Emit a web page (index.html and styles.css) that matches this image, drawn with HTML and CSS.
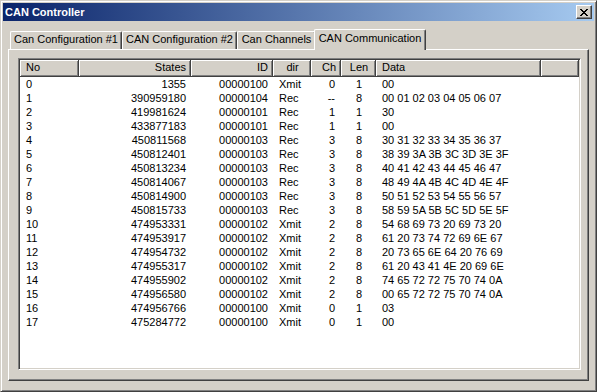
FILE: index.html
```html
<!DOCTYPE html>
<html lang="en">

<head>
    <meta charset="UTF-8">
    <meta name="viewport" content="width=device-width, initial-scale=1.0">
    <title>CAN Controller</title>
    <link rel="stylesheet" href="styles.css">
</head>

<body>

    <div class="window">
        <div class="titlebar">
            <span class="title">CAN Controller</span>
            <button class="close-btn" type="button" aria-label="Close">
                <svg width="8" height="7" viewBox="0 0 8 7" shape-rendering="crispEdges">
                    <path d="M0 0h2v1H0zM6 0h2v1H6zM1 1h2v1H1zM5 1h2v1H5zM2 2h4v1H2zM3 3h2v1H3zM2 4h4v1H2zM1 5h2v1H1zM5 5h2v1H5zM0 6h2v1H0zM6 6h2v1H6z" fill="#000"/>
                </svg>
            </button>
        </div>

        <div class="tabs">
            <div class="tab-row">
                <div class="tab tab-1">Can Configuration #1</div>
                <div class="tab tab-2">CAN Configuration #2</div>
                <div class="tab tab-3">Can Channels</div>
                <div class="tab tab-4 active">CAN Communication</div>
            </div>

            <div class="panel">
                <div class="list">
                    <div class="list-head">
                        <div class="col-head">No</div>
                        <div class="col-head r">States</div>
                        <div class="col-head r">ID</div>
                        <div class="col-head c">dir</div>
                        <div class="col-head r">Ch</div>
                        <div class="col-head c">Len</div>
                        <div class="col-head">Data</div>
                        <div class="col-head"></div>
                    </div>

                    <!-- message rows -->
                    <div class="list-row"><span>0</span><span class="r">1355</span><span class="r">00000100</span><span>Xmit</span><span class="r ch">0</span><span class="c">1</span><span>00</span></div>
                    <div class="list-row"><span>1</span><span class="r">390959180</span><span class="r">00000104</span><span>Rec</span><span class="r ch">--</span><span class="c">8</span><span>00 01 02 03 04 05 06 07</span></div>
                    <div class="list-row"><span>2</span><span class="r">419981624</span><span class="r">00000101</span><span>Rec</span><span class="r ch">1</span><span class="c">1</span><span>30</span></div>
                    <div class="list-row"><span>3</span><span class="r">433877183</span><span class="r">00000101</span><span>Rec</span><span class="r ch">1</span><span class="c">1</span><span>00</span></div>
                    <div class="list-row"><span>4</span><span class="r">450811568</span><span class="r">00000103</span><span>Rec</span><span class="r ch">3</span><span class="c">8</span><span>30 31 32 33 34 35 36 37</span></div>
                    <div class="list-row"><span>5</span><span class="r">450812401</span><span class="r">00000103</span><span>Rec</span><span class="r ch">3</span><span class="c">8</span><span>38 39 3A 3B 3C 3D 3E 3F</span></div>
                    <div class="list-row"><span>6</span><span class="r">450813234</span><span class="r">00000103</span><span>Rec</span><span class="r ch">3</span><span class="c">8</span><span>40 41 42 43 44 45 46 47</span></div>
                    <div class="list-row"><span>7</span><span class="r">450814067</span><span class="r">00000103</span><span>Rec</span><span class="r ch">3</span><span class="c">8</span><span>48 49 4A 4B 4C 4D 4E 4F</span></div>
                    <div class="list-row"><span>8</span><span class="r">450814900</span><span class="r">00000103</span><span>Rec</span><span class="r ch">3</span><span class="c">8</span><span>50 51 52 53 54 55 56 57</span></div>
                    <div class="list-row"><span>9</span><span class="r">450815733</span><span class="r">00000103</span><span>Rec</span><span class="r ch">3</span><span class="c">8</span><span>58 59 5A 5B 5C 5D 5E 5F</span></div>
                    <div class="list-row"><span>10</span><span class="r">474953331</span><span class="r">00000102</span><span>Xmit</span><span class="r ch">2</span><span class="c">8</span><span>54 68 69 73 20 69 73 20</span></div>
                    <div class="list-row"><span>11</span><span class="r">474953917</span><span class="r">00000102</span><span>Xmit</span><span class="r ch">2</span><span class="c">8</span><span>61 20 73 74 72 69 6E 67</span></div>
                    <div class="list-row"><span>12</span><span class="r">474954732</span><span class="r">00000102</span><span>Xmit</span><span class="r ch">2</span><span class="c">8</span><span>20 73 65 6E 64 20 76 69</span></div>
                    <div class="list-row"><span>13</span><span class="r">474955317</span><span class="r">00000102</span><span>Xmit</span><span class="r ch">2</span><span class="c">8</span><span>61 20 43 41 4E 20 69 6E</span></div>
                    <div class="list-row"><span>14</span><span class="r">474955902</span><span class="r">00000102</span><span>Xmit</span><span class="r ch">2</span><span class="c">8</span><span>74 65 72 72 75 70 74 0A</span></div>
                    <div class="list-row"><span>15</span><span class="r">474956580</span><span class="r">00000102</span><span>Xmit</span><span class="r ch">2</span><span class="c">8</span><span>00 65 72 72 75 70 74 0A</span></div>
                    <div class="list-row"><span>16</span><span class="r">474956766</span><span class="r">00000100</span><span>Xmit</span><span class="r ch">0</span><span class="c">1</span><span>03</span></div>
                    <div class="list-row"><span>17</span><span class="r">475284772</span><span class="r">00000100</span><span>Xmit</span><span class="r ch">0</span><span class="c">1</span><span>00</span></div>
                </div>
            </div>
        </div>
    </div>

</body>

</html>
```

FILE: styles.css
```css
body {
    margin: 0;
    background-color: #d4d0c8;
    font-family: "Liberation Sans", Arial, sans-serif;
    font-size: 11px;
    color: #000;
}

.window {
    width: 597px;
    height: 392px;
    box-sizing: border-box;
    display: flex;
    flex-direction: column;
    padding: 2px;
    background-color: #d4d0c8;
    border: 1px solid;
    border-color: #d4d0c8 #404040 #404040 #d4d0c8;
    box-shadow: inset 1px 1px #fff, inset -1px -1px #808080;
}

/* title bar */
.titlebar {
    flex: none;
    height: 18px;
    display: flex;
    align-items: center;
    padding: 0 2px;
    background: linear-gradient(to right, #0a246a, #a6caf0);
    color: #fff;
    font-weight: bold;
}

.title {
    flex: 1;
    line-height: 14px;
}

.close-btn {
    width: 16px;
    height: 14px;
    box-sizing: border-box;
    padding: 0 0 0 3px;
    display: flex;
    align-items: center;
    background-color: #d4d0c8;
    border: 1px solid;
    border-color: #fff #404040 #404040 #fff;
    box-shadow: inset -1px -1px #808080;
}

/* tabs */
.tabs {
    flex: 1;
    display: flex;
    flex-direction: column;
    margin: 8px 5px 8px;
}

.tab-row {
    flex: none;
    height: 20px;
    display: flex;
    align-items: flex-end;
    padding-left: 2px;
}

.tab {
    height: 18px;
    box-sizing: border-box;
    border: 1px solid;
    border-color: #fff #404040 transparent #fff;
    border-bottom: none;
    border-radius: 2px 2px 0 0;
    box-shadow: inset -1px 0 #808080;
    line-height: 14px;
    text-align: center;
    white-space: nowrap;
}

.tab-1 { width: 112px; }
.tab-2 { width: 115px; }
.tab-3 { width: 79px; }
.tab-4 { width: 108px; }

.tab.active {
    width: 112px;
    height: 21px;
    margin: 0 -2px -1px;
    padding-top: 1px;
    position: relative;
    z-index: 1;
    background-color: #d4d0c8;
}

.panel {
    flex: 1;
    display: flex;
    flex-direction: column;
    box-sizing: border-box;
    padding: 8px 7px 10px 9px;
    border: 1px solid;
    border-color: #fff #404040 #404040 #fff;
    box-shadow: inset -1px -1px #808080;
}

/* list view */
.list {
    flex: 1;
    padding: 1px;
    overflow: hidden;
    background-color: #fff;
    border: 1px solid;
    border-color: #808080 #fff #fff #808080;
    box-shadow: inset 1px 1px #404040, inset -1px -1px #d4d0c8;
}

.list-head,
.list-row {
    display: grid;
    grid-template-columns: 59px 112px 82px 38px 30px 35px 165px 38px;
}

.col-head {
    height: 17px;
    box-sizing: border-box;
    padding: 0 4px 0 6px;
    line-height: 14px;
    white-space: nowrap;
    overflow: hidden;
    background-color: #d4d0c8;
    border-right: 1px solid #404040;
    border-bottom: 1px solid #404040;
    box-shadow: inset 1px 1px #fff, inset -1px -1px #808080;
}

.list-row span {
    height: 14px;
    padding: 0 5px 0 6px;
    line-height: 14px;
    white-space: nowrap;
    overflow: hidden;
}

.list-row .ch {
    padding-right: 6px;
}

.r {
    text-align: right;
}

.c {
    text-align: center;
}
```
